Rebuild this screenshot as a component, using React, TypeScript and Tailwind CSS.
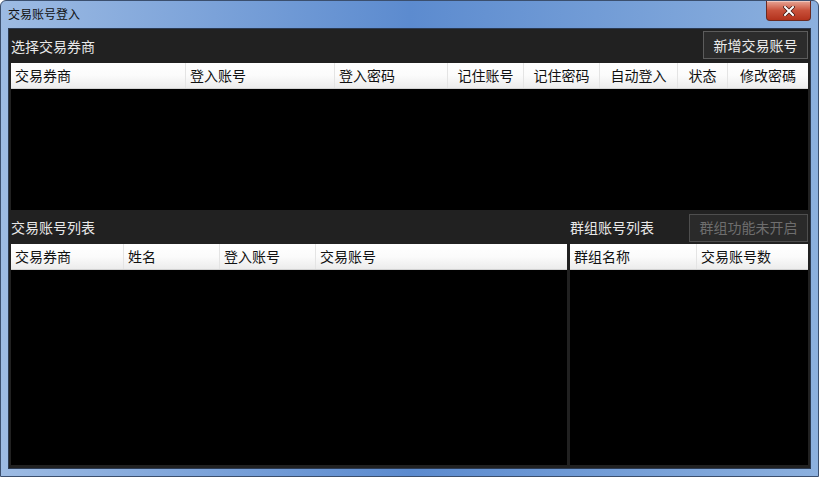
import React from "react";

const font = {
  fontFamily: '"Noto Sans CJK SC", "Microsoft YaHei", sans-serif',
};

interface Col {
  label: string;
  w: string;
  center?: boolean;
}

const brokerCols: Col[] = [
  { label: "交易券商", w: "w-[175px]" },
  { label: "登入账号", w: "w-[149px]" },
  { label: "登入密码", w: "w-[113px]" },
  { label: "记住账号", w: "w-[76px]", center: true },
  { label: "记住密码", w: "w-[76px]", center: true },
  { label: "自动登入", w: "w-[78px]", center: true },
  { label: "状态", w: "w-[50px]", center: true },
  { label: "修改密碼", w: "w-[80px]", center: true },
];

const accountCols: Col[] = [
  { label: "交易券商", w: "w-[113px]" },
  { label: "姓名", w: "w-[96px]" },
  { label: "登入账号", w: "w-[96px]" },
  { label: "交易账号", w: "w-[96px]" },
];

const groupCols: Col[] = [
  { label: "群组名称", w: "w-[127px]" },
  { label: "交易账号数", w: "w-[111px]" },
];

function HeaderRow({ cols }: { cols: Col[] }) {
  return (
    <div className="flex h-[26px] shrink-0 bg-gradient-to-b from-white via-[#fbfbfb] to-[#ececec] border-b border-[#d2d2d2]">
      {cols.map((c, i) => (
        <div
          key={c.label}
          className={
            "flex h-full shrink-0 items-center text-[14px] text-[#111] " +
            c.w +
            (i < cols.length - 1 ? " border-r border-[#e4e4e4]" : "") +
            (c.center ? " justify-center" : " pl-[4px]")
          }
        >
          {c.label}
        </div>
      ))}
      <div className="flex-1" />
    </div>
  );
}

function CloseButton() {
  return (
    <div className="flex h-[20px] w-[45px] items-center justify-center rounded-b-[4px] border border-t-0 border-[#6b2a20] bg-gradient-to-b from-[#e6a596] via-[#c8503a] to-[#b3321c] shadow-[inset_0_1px_0_rgba(255,255,255,0.4)]">
      <svg width="12" height="10" viewBox="0 0 12 10">
        <path
          d="M2 1 L10 9 M10 1 L2 9"
          stroke="#3a1410"
          strokeWidth="3.4"
          strokeLinecap="square"
        />
        <path
          d="M2 1 L10 9 M10 1 L2 9"
          stroke="#ffffff"
          strokeWidth="2"
          strokeLinecap="square"
        />
      </svg>
    </div>
  );
}

export default function App() {
  return (
    <div
      className="flex h-[477px] w-[819px] flex-col overflow-hidden rounded-t-[6px] border border-[#3b4f6e] bg-gradient-to-r from-[#9dbbe3] via-[#5c8bcf] to-[#8cb0de]"
      style={font}
    >
      {/* Title bar */}
      <div className="flex h-[27px] shrink-0 items-start justify-between pl-[7px] pr-[7px]">
        <div className="pt-[5px] text-[12px] leading-[16px] text-[#111]">
          交易账号登入
        </div>
        <CloseButton />
      </div>

      {/* Client area */}
      <div className="mx-[7px] mb-[7px] flex flex-1 flex-col border border-[#2b3a52] bg-[#212121] px-[2px] pb-[3px]">
        {/* Broker section */}
        <div className="flex h-[34px] shrink-0 items-center justify-between">
          <span className="text-[14px] text-[#e8e8e8]">选择交易券商</span>
          <button
            type="button"
            className="mt-[-2px] h-[28px] w-[105px] border border-[#5c5c5c] bg-[#2c2c2c] text-[14px] text-[#ececec]"
          >
            新增交易账号
          </button>
        </div>
        <div className="flex h-[147px] shrink-0 flex-col bg-black">
          <HeaderRow cols={brokerCols} />
          <div className="flex-1" />
        </div>

        {/* Lists section */}
        <div className="flex flex-1 gap-[3px] pt-[1px]">
          <div className="flex w-[556px] shrink-0 flex-col">
            <div className="flex h-[33px] shrink-0 items-center">
              <span className="text-[14px] text-[#e8e8e8]">交易账号列表</span>
            </div>
            <div className="flex flex-1 flex-col bg-black">
              <HeaderRow cols={accountCols} />
              <div className="flex-1" />
            </div>
          </div>
          <div className="flex flex-1 flex-col">
            <div className="flex h-[33px] shrink-0 items-center justify-between">
              <span className="text-[14px] text-[#e8e8e8]">群组账号列表</span>
              <button
                type="button"
                className="h-[28px] w-[119px] border border-[#4e4e4e] bg-[#2a2a2a] text-[14px] text-[#6e6e6e]"
              >
                群组功能未开启
              </button>
            </div>
            <div className="flex flex-1 flex-col bg-black">
              <HeaderRow cols={groupCols} />
              <div className="flex-1" />
            </div>
          </div>
        </div>
      </div>
    </div>
  );
}
